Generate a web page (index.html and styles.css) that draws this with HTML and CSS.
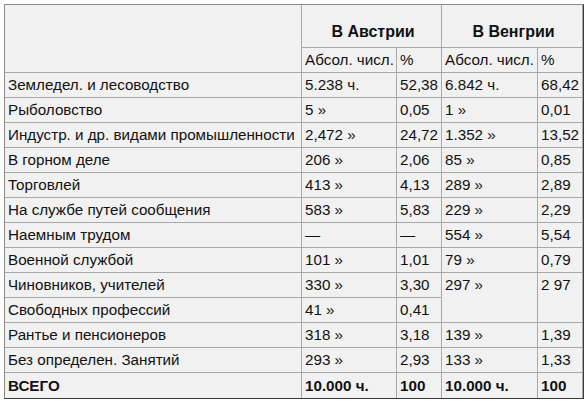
FILE: index.html
```html
<!DOCTYPE html>
<html lang="ru">
<head>
<meta charset="utf-8">
<link rel="stylesheet" href="styles.css">
</head>
<body>
<table class="stats">
  <colgroup>
    <col class="w-label">
    <col class="w-abs">
    <col class="w-pct">
    <col class="w-abs2">
    <col class="w-pct2">
  </colgroup>
  <tr class="head1">
    <th rowspan="2"></th>
    <th class="group" colspan="2">В Австрии</th>
    <th class="group" colspan="2">В Венгрии</th>
  </tr>
  <tr>
    <td>Абсол. числ.</td>
    <td>%</td>
    <td>Абсол. числ.</td>
    <td>%</td>
  </tr>
  <tr><td>Земледел. и лесоводство</td><td>5.238 ч.</td><td>52,38</td><td>6.842 ч.</td><td>68,42</td></tr>
  <tr><td>Рыболовство</td><td>5 »</td><td>0,05</td><td>1 »</td><td>0,01</td></tr>
  <tr><td>Индустр. и др. видами промышленности</td><td>2,472 »</td><td>24,72</td><td>1.352 »</td><td>13,52</td></tr>
  <tr><td>В горном деле</td><td>206 »</td><td>2,06</td><td>85 »</td><td>0,85</td></tr>
  <tr><td>Торговлей</td><td>413 »</td><td>4,13</td><td>289 »</td><td>2,89</td></tr>
  <tr><td>На службе путей сообщения</td><td>583 »</td><td>5,83</td><td>229 »</td><td>2,29</td></tr>
  <tr><td>Наемным трудом</td><td>—</td><td>—</td><td>554 »</td><td>5,54</td></tr>
  <tr><td>Военной службой</td><td>101 »</td><td>1,01</td><td>79 »</td><td>0,79</td></tr>
  <tr><td>Чиновников, учителей</td><td>330 »</td><td>3,30</td><td class="top" rowspan="2">297 »</td><td class="top" rowspan="2">2 97</td></tr>
  <tr><td>Свободных профессий</td><td>41 »</td><td>0,41</td></tr>
  <tr><td>Рантье и пенсионеров</td><td>318 »</td><td>3,18</td><td>139 »</td><td>1,39</td></tr>
  <tr><td>Без определен. Занятий</td><td>293 »</td><td>2,93</td><td>133 »</td><td>1,33</td></tr>
  <tr class="total"><td>ВСЕГО</td><td>10.000 ч.</td><td>100</td><td>10.000 ч.</td><td>100</td></tr>
</table>
</body>
</html>
```

FILE: styles.css
```css
html, body {
  margin: 0;
  padding: 0;
  background: #ffffff;
}
body {
  padding: 4px;
  font-family: "Liberation Sans", Arial, sans-serif;
  font-size: 15.2px;
  color: #111111;
}
.stats {
  border-collapse: separate;
  border-spacing: 0;
  table-layout: fixed;
  width: 580px;
  background: #f1f1f1;
  border-top: 1px solid #8a8a8a;
  border-left: 1px solid #8a8a8a;
  border-right: 1px solid #3a3a3a;
  border-bottom: 1px solid #3a3a3a;
}
.w-label { width: 297px; }
.w-abs { width: 95px; }
.w-pct { width: 45px; }
.w-abs2 { width: 96px; }
.w-pct2 { width: 45px; }
.stats td, .stats th {
  box-sizing: border-box;
  border-right: 1px solid #a8a8a8;
  border-bottom: 1px solid #a8a8a8;
  padding: 0 0 0 3px;
  text-align: left;
  vertical-align: middle;
  white-space: nowrap;
  overflow: hidden;
  font-weight: normal;
  line-height: 18px;
}
.stats tr {
  height: 25px;
}
.stats tr.head1 {
  height: 43px;
}
.stats .group {
  text-align: center;
  vertical-align: bottom;
  padding-bottom: 6px;
  font-weight: bold;
  font-size: 16px;
}
.stats td.top {
  vertical-align: top;
  padding-top: 3px;
}
.stats tr.total td {
  font-weight: bold;
  border-bottom: 0;
}
```
